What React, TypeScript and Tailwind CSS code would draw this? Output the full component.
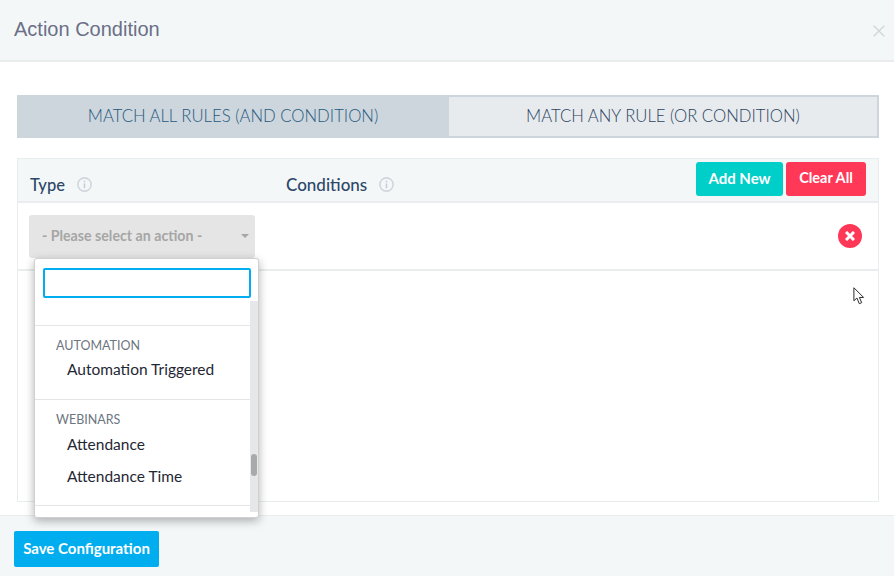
const font = { lato: "font-['Lato','Liberation_Sans',sans-serif]" };

function InfoIcon({ className }: { className?: string }) {
  return (
    <svg viewBox="0 0 14 14" className={className} fill="none">
      <circle cx="7" cy="7" r="6.2" stroke="#cfd6de" strokeWidth="1.5" />
      <rect x="6.3" y="6" width="1.4" height="4.4" fill="#c5ccd4" />
      <rect x="6.3" y="3.5" width="1.4" height="1.4" fill="#c5ccd4" />
    </svg>
  );
}

function Dropdown() {
  return (
    <div className="absolute left-[16px] top-[99px] z-10 h-[260px] w-[225px] rounded-[3px] border border-[#d0d0d0] bg-white shadow-[0_3px_10px_rgba(0,0,0,0.3)]">
      <div className="px-2 pt-[9px]">
        <div className="h-[30px] w-[208px] rounded-[2px] border-2 border-[#00adef] bg-white" />
      </div>
      {/* Scrollbar */}
      <div className="absolute right-0 top-[42px] h-[211px] w-[8px] bg-[#e6e7e9]">
        <div className="absolute left-[1px] top-[153px] h-[22px] w-[6px] rounded-[3px] bg-[#a8abae]" />
      </div>
      <div className="mr-[8px] mt-[27px] border-t border-[#e4e4e4] pb-[14px] pl-[21px] pt-[12px]">
        <div className="text-[12.5px] leading-[16px] text-[#6d7580]">AUTOMATION</div>
        <div className="pl-[11px] pt-[6px] text-[15.5px] leading-[18px] text-[#1f2733]">Automation Triggered</div>
      </div>
      <div className="mr-[8px] mt-[7px] border-t border-[#e4e4e4] pb-[20px] pl-[21px] pt-[12px]">
        <div className="text-[12.5px] leading-[16px] text-[#6d7580]">WEBINARS</div>
        <div className="pl-[11px] pt-[7px] text-[15.5px] leading-[18px] text-[#1f2733]">Attendance</div>
        <div className="pl-[11px] pt-[14px] text-[15.5px] leading-[18px] text-[#1f2733]">Attendance Time</div>
      </div>
      <div className="mr-[8px] border-t border-[#e4e4e4]" />
    </div>
  );
}

export default function App() {
  return (
    <div className={`relative flex h-[576px] w-[894px] flex-col overflow-hidden bg-white ${font.lato}`}>
      {/* Header */}
      <div className="flex h-[62px] shrink-0 items-center justify-between border-b-2 border-[#e9eded] bg-[#f4f7f8] pl-[14px] pr-[9px]">
        <h4 className="pb-[2px] font-['Liberation_Sans',Arial,sans-serif] text-[20px] leading-[58px] text-[#6b6f87]">Action Condition</h4>
        <svg viewBox="0 0 12 12" className="mt-[1px] h-[12px] w-[12px]" stroke="#d0d5d8" strokeWidth="1.3">
          <path d="M0.7 0.7 L11.3 11.3 M11.3 0.7 L0.7 11.3" />
        </svg>
      </div>

      {/* Body */}
      <div className="flex flex-1 flex-col pl-[17px] pr-[15px] pt-[33px]">
        <div className="flex h-[43px] shrink-0">
          <div className="flex w-[432px] items-center justify-center bg-[#cdd5dd] pt-[1px] text-[16.7px] font-light text-[#255a7e]">
            MATCH ALL RULES (AND CONDITION)
          </div>
          <div className="flex flex-1 items-center justify-center border-y-2 border-r-2 border-[#cdd5dd] bg-[#e7ebee] pt-[1px] text-[16.7px] font-light text-[#2c4560]">
            MATCH ANY RULE (OR CONDITION)
          </div>
        </div>

        <div className="relative mt-[20px] h-[344px] border border-[#e9eded]">
          <div className="flex h-[44px] items-start border-b-2 border-[#e9eded] bg-[#f4f7f8] pl-[12px]">
            <div className="flex w-[256px] items-center gap-[12px] pt-[14px]">
              <span className="text-[16.5px] font-medium leading-[24px] text-[#2c4768]">Type</span>
              <InfoIcon className="-mt-[1px] h-[15px] w-[15px]" />
            </div>
            <div className="flex items-center gap-[12px] pt-[14px]">
              <span className="text-[17px] font-medium leading-[24px] text-[#2c4768]">Conditions</span>
              <InfoIcon className="-mt-[1px] h-[15px] w-[15px]" />
            </div>
            <div className="ml-auto mr-[12px] mt-[3px] flex gap-[3px]">
              <button className="h-[34px] w-[87px] rounded-[3px] bg-[#00cec8] pb-[2px] text-[15px] font-bold text-white">Add New</button>
              <button className="h-[34px] w-[80px] rounded-[3px] bg-[#ff3858] pb-[2px] text-[14.5px] font-bold text-white">Clear All</button>
            </div>
          </div>
          <div className="flex h-[68px] items-center justify-between border-b-2 border-[#e9eded] pl-[11px] pr-[16px]">
            <div className="flex h-[43px] w-[226px] items-center justify-between rounded-[3px] bg-[#e5e5e5] pl-[13px] pr-[5px] text-[14.2px] font-bold text-[#a6a6a6]">
              <span>- Please select an action -</span>
              <svg viewBox="0 0 8 4" className="mr-[1px] h-[4px] w-[8px]"><path d="M0 0 H8 L4 4 Z" fill="#a6a6a6" /></svg>
            </div>
            <div className="flex h-[24px] w-[24px] items-center justify-center rounded-full bg-[#ff3858]">
              <svg viewBox="0 0 10 10" className="h-[10px] w-[10px]" stroke="white" strokeWidth="3">
                <path d="M1 1 L9 9 M9 1 L1 9" />
              </svg>
            </div>
          </div>
          <Dropdown />
        </div>
      </div>

      {/* Footer */}
      <div className="mt-[13px] flex h-[61px] shrink-0 items-start border-t border-[#e9eded] bg-[#f4f7f8] pl-[14px] pt-[15px]">
        <button className="h-[36px] w-[145px] rounded-[2px] bg-[#00adef] pb-[2px] text-[15px] font-bold text-white">Save Configuration</button>
      </div>

      {/* Mouse pointer */}
      <svg viewBox="0 0 13 20" className="absolute left-[853px] top-[287px] z-20 h-[19px] w-[13px]" fill="white" stroke="#222" strokeWidth="1">
        <path d="M0.6 0.8 V14.5 L3.8 11.6 L6.3 17.6 L8.8 16.5 L6.4 11 H10.8 Z" />
      </svg>
    </div>
  );
}
